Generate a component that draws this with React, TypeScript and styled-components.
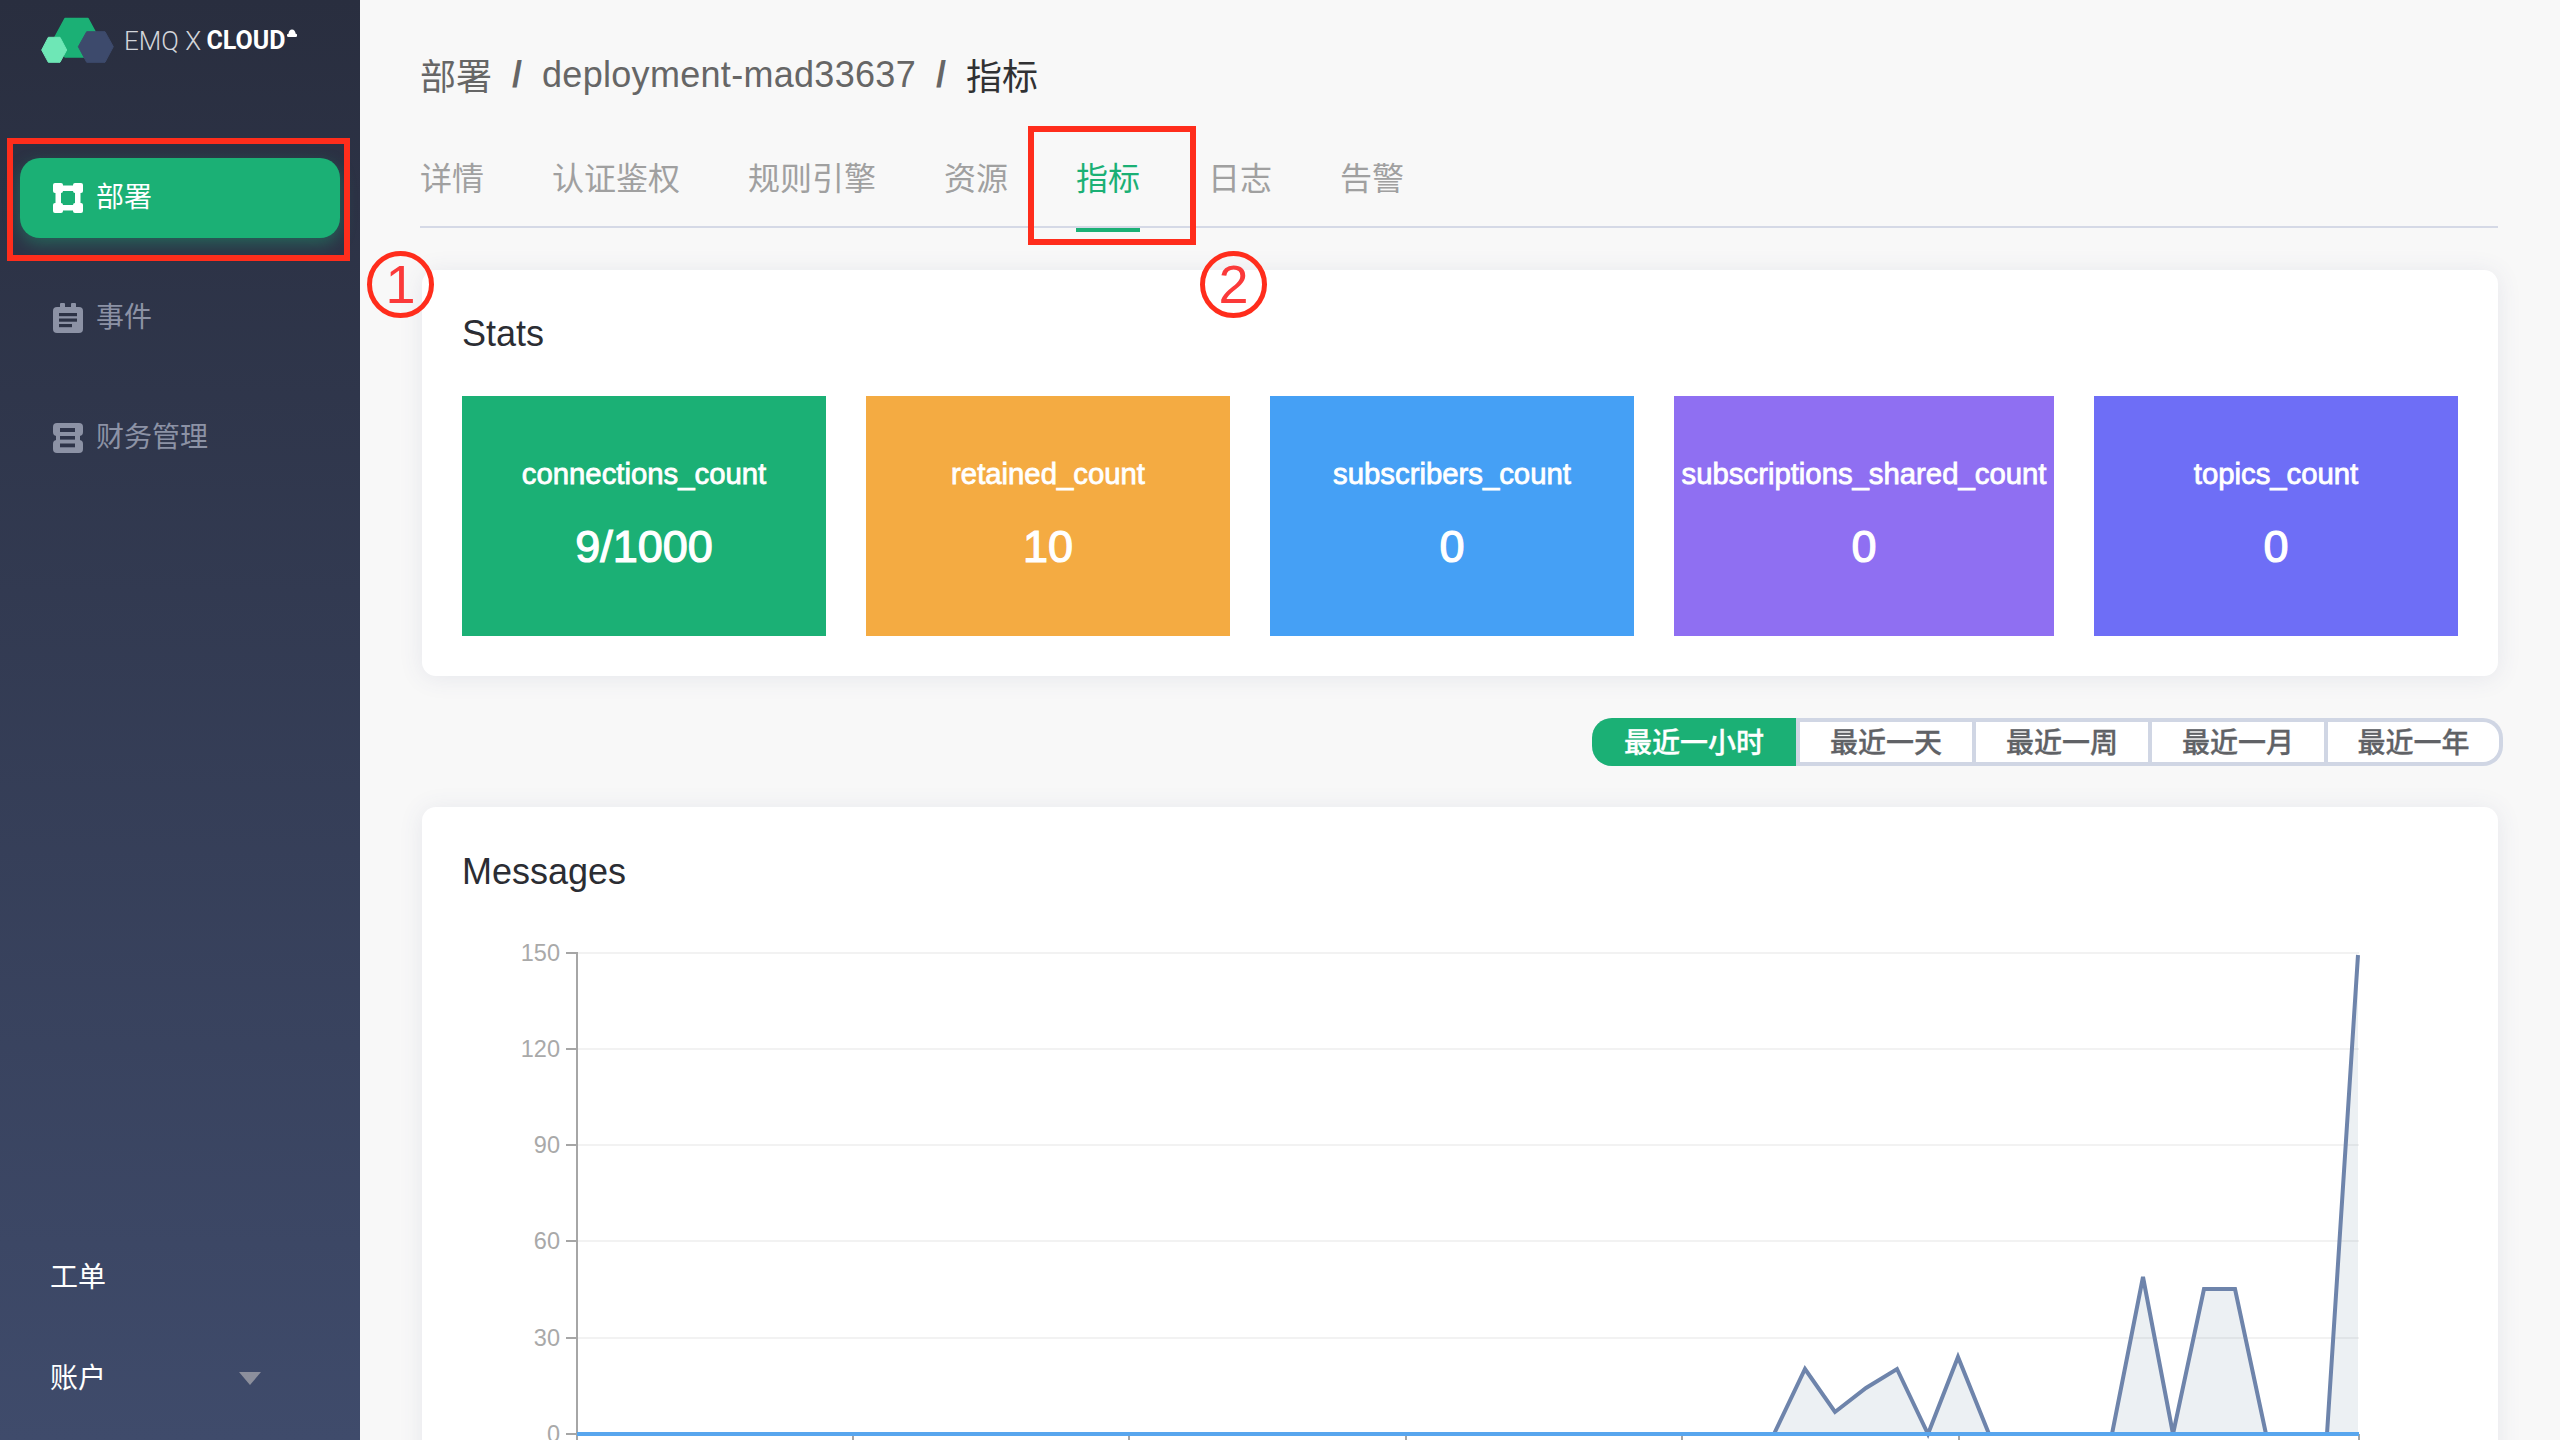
import React from "react";
import styled, { createGlobalStyle } from "styled-components";

const FONT = '"Liberation Sans", "Noto Sans CJK SC", sans-serif';
const GREEN = "#1bb075";
const RED = "#ff2d1c";

const GlobalStyle = createGlobalStyle`
  html, body {
    margin: 0;
    padding: 0;
    background: #f8f8f8;
  }
  * {
    box-sizing: border-box;
  }
`;

const Page = styled.div`
  position: relative;
  display: grid;
  grid-template-columns: 360px 1fr;
  grid-template-rows: 1440px;
  width: 2560px;
  height: 1440px;
  overflow: hidden;
  font-family: ${FONT};
`;

const Sidebar = styled.aside`
  display: flex;
  flex-direction: column;
  height: 1440px;
  padding: 0 20px 44px;
  background: linear-gradient(180deg, #292e3f 0%, #3f4b6b 100%);
`;

const Logo = styled.div`
  display: flex;
  align-items: flex-start;
  height: 158px;
  padding: 16px 0 0 20px;
`;

const Wordmark = styled.div`
  display: flex;
  margin: 9px 0 0 9px;
  font-family: Roboto, sans-serif;
  font-size: 26px;
  line-height: 32px;
  color: #d3d5da;
  font-weight: 300;
  white-space: pre;

  b {
    margin-left: -1px;
    font-size: 25px;
    font-weight: 700;
    color: #ffffff;
  }

  svg {
    margin: 3px 0 0 1px;
  }
`;

const Nav = styled.nav`
  display: flex;
  flex-direction: column;
  gap: 40px;
`;

const NavItem = styled.div<{ $active?: boolean }>`
  display: flex;
  align-items: center;
  gap: 14px;
  height: 80px;
  padding-left: 33px;
  border-radius: 20px;
  font-size: 28px;
  line-height: 76px;
  color: ${(p) => (p.$active ? "#ffffff" : "#8c92a5")};
  background: ${(p) => (p.$active ? GREEN : "transparent")};
  box-shadow: ${(p) => (p.$active ? "0 6px 16px rgba(27, 176, 117, 0.38)" : "none")};
`;

const NavLabel = styled.span`
  margin-left: -1px;
`;

const BottomLinks = styled.div`
  display: flex;
  flex-direction: column;
  gap: 61px;
  margin-top: auto;
  padding-left: 30px;
`;

const BottomLink = styled.div`
  display: flex;
  align-items: center;
  height: 40px;
  font-size: 28px;
  color: #ffffff;
`;

const Caret = styled.span`
  width: 0;
  height: 0;
  margin: 4px 0 0 133px;
  border-left: 11px solid transparent;
  border-right: 11px solid transparent;
  border-top: 13px solid #8c8f9c;
`;

const Main = styled.main`
  min-width: 0;
  padding: 0 62px 0 60px;
`;

const Breadcrumb = styled.div`
  display: flex;
  align-items: center;
  height: 150px;
  font-size: 36px;
  color: #666666;
`;

const Crumb = styled.span`
  margin-top: -3px;
`;

const DeploymentName = styled.span`
  letter-spacing: 0.3px;
`;

const Separator = styled.span`
  margin: 0 20px;
  font-weight: 700;
  color: #666666;
`;

const CurrentCrumb = styled(Crumb)`
  color: #303133;
`;

const Tabs = styled.div`
  display: flex;
  gap: 68px;
  height: 78px;
  border-bottom: 2px solid #d5d9e6;
`;

const Tab = styled.div<{ $active?: boolean }>`
  position: relative;
  height: 78px;
  font-size: 32px;
  line-height: 58px;
  color: ${(p) => (p.$active ? GREEN : "#a0a0a0")};

  &::after {
    content: "";
    display: ${(p) => (p.$active ? "block" : "none")};
    position: absolute;
    left: 0;
    right: 0;
    bottom: -4px;
    height: 4px;
    background: ${GREEN};
  }
`;

const Card = styled.section`
  margin-left: 2px;
  padding: 39px 40px 40px;
  border-radius: 14px;
  background: #ffffff;
  box-shadow: 0 2px 24px rgba(70, 80, 130, 0.1);
`;

const StatsCard = styled(Card)`
  margin-top: 42px;
`;

const ChartCard = styled(Card)`
  margin-top: 41px;
  padding-top: 40px;
`;

const CardTitle = styled.h2`
  margin: 0;
  font-size: 36px;
  font-weight: 400;
  line-height: 50px;
  color: #2b2d33;
`;

const TileRow = styled.div`
  display: grid;
  grid-template-columns: 364px 364px 364px 380px 364px;
  gap: 40px;
  margin-top: 37px;
`;

const Tile = styled.div<{ $color: string }>`
  display: flex;
  flex-direction: column;
  align-items: center;
  height: 240px;
  padding-top: 58px;
  color: #ffffff;
  background: ${(p) => p.$color};
`;

const TileLabel = styled.div`
  font-size: 29.3px;
  line-height: 40px;
  white-space: nowrap;
  -webkit-text-stroke: 0.8px #ffffff;
`;

const TileValue = styled.div`
  margin-top: 26px;
  font-size: 45px;
  line-height: 54px;
  -webkit-text-stroke: 1.2px #ffffff;
`;

const RangeBar = styled.div`
  display: flex;
  justify-content: flex-end;
  margin: 42px -5px 0 0;
`;

const RangeGroup = styled.div`
  display: flex;
  height: 48px;
  border: 4px solid #d0d6e4;
  border-left: 0;
  border-radius: 20px;
  background: #ffffff;
`;

const RangeButton = styled.div<{ $active?: boolean }>`
  display: flex;
  align-items: center;
  justify-content: center;
  width: ${(p) => (p.$active ? "208px" : "176px")};
  margin: ${(p) => (p.$active ? "-4px 0" : "0")};
  padding-bottom: 2px;
  border-right: 4px solid #d0d6e4;
  border-radius: ${(p) => (p.$active ? "20px 0 0 20px" : "0")};
  font-size: 28px;
  font-weight: 500;
  -webkit-text-stroke: 0.3px currentColor;
  color: ${(p) => (p.$active ? "#ffffff" : "#606266")};
  background: ${(p) => (p.$active ? GREEN : "transparent")};

  &:last-child {
    width: 171px;
    border-right: 0;
    border-radius: 0 18px 18px 0;
  }
`;

const ChartSvg = styled.svg`
  display: block;
  margin-top: 33px;
  overflow: visible;
`;

const AxisLabel = styled.text`
  font-family: ${FONT};
  font-size: 23.5px;
  fill: #a9a9a9;
`;

const Box = styled.div<{ $left: number; $top: number; $w: number; $h: number }>`
  position: absolute;
  left: ${(p) => p.$left}px;
  top: ${(p) => p.$top}px;
  width: ${(p) => p.$w}px;
  height: ${(p) => p.$h}px;
  border: 6px solid ${RED};
`;

const Marker = styled.div<{ $left: number }>`
  position: absolute;
  left: ${(p) => p.$left}px;
  top: 251px;
  display: flex;
  align-items: center;
  justify-content: center;
  width: 67px;
  height: 67px;
  padding-bottom: 2px;
  border: 5px solid ${RED};
  border-radius: 50%;
  font-size: 54px;
  color: #fb3a3a;
`;

const LogoMark = () => (
  <svg width="75" height="48" viewBox="0 0 75 48">
    <polygon points="25,2.5 48,2.5 58,21 48,41 25,41 15,21" fill="#1bb075" stroke="#1bb075" strokeWidth="1.5" strokeLinejoin="round" />
    <polygon points="1.7,34 8.3,21.3 20,21.3 26.7,34 20,46.3 8.3,46.3" fill="#6ee7b6" stroke="#6ee7b6" strokeWidth="1" strokeLinejoin="round" />
    <polygon points="38.3,30.7 46.7,15.7 65,15.7 73.3,30.7 65,46.3 46.7,46.3" fill="#3d4a6c" stroke="#3d4a6c" strokeWidth="1" strokeLinejoin="round" />
  </svg>
);

const CloudGlyph = () => (
  <svg width="10" height="10" viewBox="0 0 10 10">
    <path d="M1.6 9h6.8a1.6 1.6 0 0 0 .3-3.2C8.5 3.6 7 1.5 5 1.5S1.7 3.4 1.5 5.8A1.6 1.6 0 0 0 1.6 9z" fill="#ffffff" />
  </svg>
);

const DeployIcon = () => (
  <svg width="30" height="30" viewBox="0 0 30 30" fill="#ffffff">
    <rect x="0" y="0" width="10" height="10" rx="2" />
    <rect x="20" y="0" width="10" height="10" rx="2" />
    <rect x="0" y="20" width="10" height="10" rx="2" />
    <rect x="20" y="20" width="10" height="10" rx="2" />
    <rect x="8" y="2.5" width="14" height="5.5" />
    <rect x="8" y="22" width="14" height="5.5" />
    <rect x="2.5" y="8" width="5.5" height="14" />
    <rect x="22" y="8" width="5.5" height="14" />
  </svg>
);

const EventIcon = () => (
  <svg width="30" height="30" viewBox="0 0 30 30">
    <rect x="0" y="4" width="30" height="26" rx="4" fill="#8c92a5" />
    <rect x="7" y="0" width="5" height="7" rx="1" fill="#8c92a5" />
    <rect x="18" y="0" width="5" height="7" rx="1" fill="#8c92a5" />
    <rect x="6" y="10" width="18" height="3.2" fill="#2c3245" />
    <rect x="6" y="15.5" width="18" height="3.2" fill="#2c3245" />
    <rect x="6" y="21" width="13" height="3.2" fill="#2c3245" />
  </svg>
);

const FinanceIcon = () => (
  <svg width="30" height="30" viewBox="0 0 30 30">
    <rect x="0" y="0" width="30" height="13" rx="4" fill="#8c92a5" />
    <rect x="0" y="17" width="30" height="13" rx="4" fill="#8c92a5" />
    <rect x="3" y="9" width="24" height="12" fill="#8c92a5" />
    <rect x="7" y="5" width="15" height="4" fill="#2e3449" />
    <rect x="7" y="13" width="15" height="3.6" fill="#2e3449" />
    <rect x="7" y="20.5" width="15" height="3.8" fill="#2e3449" />
  </svg>
);

const stats = [
  { label: "connections_count", value: "9/1000", color: "#1bb075" },
  { label: "retained_count", value: "10", color: "#f4ab42" },
  { label: "subscribers_count", value: "0", color: "#45a0f5" },
  { label: "subscriptions_shared_count", value: "0", color: "#8f6ff2" },
  { label: "topics_count", value: "0", color: "#6e6ef6" },
];

const ranges = ["最近一小时", "最近一天", "最近一周", "最近一月", "最近一年"];
const tabs = ["详情", "认证鉴权", "规则引擎", "资源", "指标", "日志", "告警"];

// chart geometry, origin is the top-left of the svg
const ORIGIN_X = 462;
const ORIGIN_Y = 930;
const AXIS_X = 577 - ORIGIN_X;
const END_X = 2359 - ORIGIN_X;
const BASE_Y = 1434 - ORIGIN_Y;
const yTicks = [
  { label: "150", y: 953 },
  { label: "120", y: 1049 },
  { label: "90", y: 1145 },
  { label: "60", y: 1241 },
  { label: "30", y: 1338 },
  { label: "0", y: 1434 },
];
const xTicks = [577, 853, 1129, 1406, 1682, 1959, 2359];
const series: [number, number][] = [
  [1774, 1434], [1805, 1369], [1835, 1412], [1866, 1388], [1897, 1369], [1928, 1434],
  [1958, 1357], [1989, 1434], [2112, 1434], [2143, 1277], [2173, 1434], [2204, 1289],
  [2235, 1289], [2266, 1434], [2327, 1434], [2358, 955],
];

const Chart = () => {
  const points = series.map(([x, y]) => `${x - ORIGIN_X},${y - ORIGIN_Y}`).join(" ");
  const areaPoints = `${points} ${2358 - ORIGIN_X},${BASE_Y}`;
  return (
    <ChartSvg width="1996" height="560" viewBox="0 0 1996 560">
      {yTicks.map((t) => (
        <g key={t.label}>
          <line x1={AXIS_X} x2={END_X} y1={t.y - ORIGIN_Y} y2={t.y - ORIGIN_Y} stroke="#f2f2f2" strokeWidth="2" />
          <line x1={AXIS_X - 11} x2={AXIS_X} y1={t.y - ORIGIN_Y} y2={t.y - ORIGIN_Y} stroke="#a6a6a6" strokeWidth="2" />
          <AxisLabel x={AXIS_X - 17} y={t.y - ORIGIN_Y + 8} textAnchor="end">
            {t.label}
          </AxisLabel>
        </g>
      ))}
      <line x1={AXIS_X} x2={AXIS_X} y1={953 - ORIGIN_Y - 1} y2={BASE_Y + 10} stroke="#a6a6a6" strokeWidth="2" />
      {xTicks.map((x) => (
        <line key={x} x1={x - ORIGIN_X} x2={x - ORIGIN_X} y1={BASE_Y} y2={BASE_Y + 10} stroke="#a6a6a6" strokeWidth="2" />
      ))}
      <polygon points={areaPoints} fill="rgba(109, 140, 165, 0.13)" />
      <polyline points={points} fill="none" stroke="#6e84ab" strokeWidth="4" strokeLinejoin="miter" />
      <line x1={AXIS_X} x2={END_X} y1={BASE_Y} y2={BASE_Y} stroke="#58a6ee" strokeWidth="4" />
    </ChartSvg>
  );
};

const App = () => {
  return (
    <Page>
      <GlobalStyle />
      <Sidebar>
        <Logo>
          <LogoMark />
          <Wordmark>
            <span>EMQ X </span>
            <b>CLOUD</b>
            <CloudGlyph />
          </Wordmark>
        </Logo>
        <Nav>
          <NavItem $active>
            <DeployIcon />
            <NavLabel>部署</NavLabel>
          </NavItem>
          <NavItem>
            <EventIcon />
            <NavLabel>事件</NavLabel>
          </NavItem>
          <NavItem>
            <FinanceIcon />
            <NavLabel>财务管理</NavLabel>
          </NavItem>
        </Nav>
        <BottomLinks>
          <BottomLink>工单</BottomLink>
          <BottomLink>
            账户
            <Caret />
          </BottomLink>
        </BottomLinks>
      </Sidebar>
      <Main>
        <Breadcrumb>
          <Crumb>部署</Crumb>
          <Separator>/</Separator>
          <DeploymentName>deployment-mad33637</DeploymentName>
          <Separator>/</Separator>
          <CurrentCrumb>指标</CurrentCrumb>
        </Breadcrumb>
        <Tabs>
          {tabs.map((tab) => (
            <Tab key={tab} $active={tab === "指标"}>
              {tab}
            </Tab>
          ))}
        </Tabs>
        <StatsCard>
          <CardTitle>Stats</CardTitle>
          <TileRow>
            {stats.map((s) => (
              <Tile key={s.label} $color={s.color}>
                <TileLabel>{s.label}</TileLabel>
                <TileValue>{s.value}</TileValue>
              </Tile>
            ))}
          </TileRow>
        </StatsCard>
        <RangeBar>
          <RangeGroup>
            {ranges.map((r, i) => (
              <RangeButton key={r} $active={i === 0}>
                {r}
              </RangeButton>
            ))}
          </RangeGroup>
        </RangeBar>
        <ChartCard>
          <CardTitle>Messages</CardTitle>
          <Chart />
        </ChartCard>
      </Main>
      <Box $left={7} $top={138} $w={343} $h={123} />
      <Box $left={1028} $top={126} $w={168} $h={119} />
      <Marker $left={367}>1</Marker>
      <Marker $left={1200}>2</Marker>
    </Page>
  );
};

export default App;
